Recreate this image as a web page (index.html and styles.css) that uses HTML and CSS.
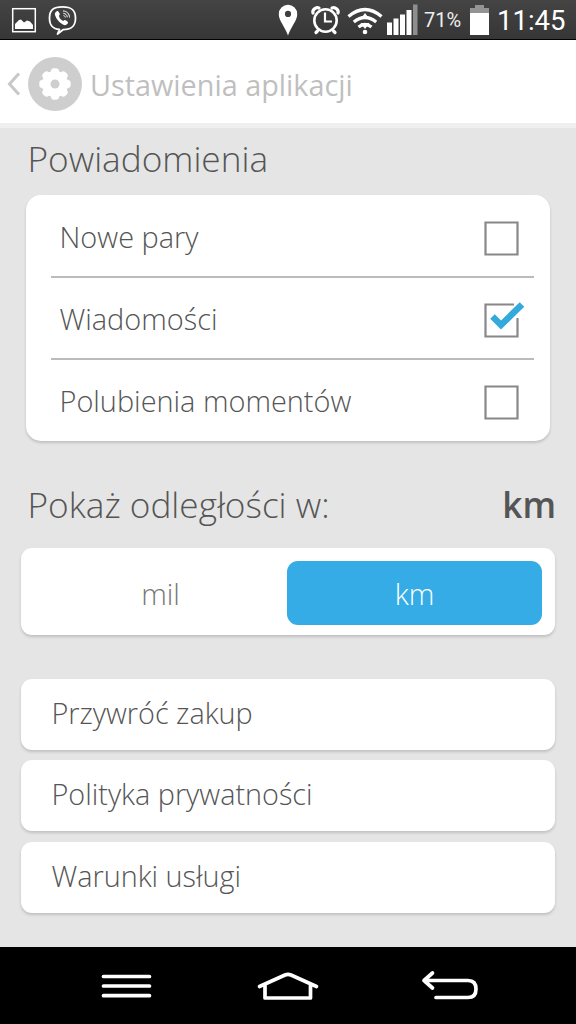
FILE: index.html
```html
<!DOCTYPE html>
<html lang="pl">
<head>
<meta charset="utf-8">
<title>Ustawienia aplikacji</title>
<link rel="stylesheet" href="styles.css">
</head>
<body>
<div class="phone">
  <div class="status">
    <svg class="status-left" width="80" height="39" viewBox="0 0 80 39" fill="none" stroke="#fff">
      <rect x="12.700" y="8.700" width="22.600" height="23" stroke-width="1.500"/>
      <path d="M15 29v-5l4-4 2-.5 3 3 3-2 3 1 3 3.500v4z" fill="#fff" stroke="none"/>
      <path d="M59.500 29.500c-7-.8-10-4-10-11.500 0-8 4-11.200 13-11.200S75.500 10 75.500 18c0 7.500-3 11.500-12.500 11.700l-5.500 4.300z" stroke-width="1.800" stroke-linejoin="round"/>
      <path d="M56.500 11.500c1-.8 1.700-.4 2.700 1.300.9 1.600.8 2-.3 3 .5 2.500 2 4.300 4.300 5.200 1.300-1.300 1.700-1.300 3.300-.2 2 1.400 2 2 .7 3.300-1.400 1.500-2.500 1.300-4.700.1-3.700-2.200-6.200-5.200-7.400-9-.5-1.800 0-2.900 1.400-3.700z" fill="#fff" stroke="none"/>
      <path d="M63 11c4 0 6.500 3 6.500 6.500M63.300 13.300c2.300.2 3.800 1.700 4 4M63.500 15.600c1.200.1 1.700.8 1.800 1.900" stroke-width="1"/>
    </svg>
    <div class="status-right">
      <svg class="pin" width="20" height="32" viewBox="0 0 20 32"><path fill="#fff" fill-rule="evenodd" d="M10 .8a9.200 9.200 0 0 1 9.200 9.400c0 6.500-6 12-9.200 21.300C6.800 22.200.8 16.700.8 10.200A9.200 9.200 0 0 1 10 .8zm0 6a3.100 3.100 0 1 0 0 6.200 3.100 3.100 0 0 0 0-6.200z"/></svg>
      <svg class="alarm" width="30" height="30" viewBox="0 0 30 30" fill="none" stroke="#fff" stroke-linecap="round"><circle cx="14.500" cy="15.500" r="11.200" stroke-width="2.600"/><path d="M14 7.500v9h7" stroke-width="2.200" stroke-linecap="butt"/><path d="M2 8C1 5 4.500 1.800 8 3M27 8C28 5 24.500 1.800 21 3M6.500 26l-1.500 1.500M22.500 26l1.500 1.500" stroke-width="3.200"/></svg>
      <svg class="wifi" width="36" height="28" viewBox="0 0 36 28" fill="none" stroke="#fff"><path d="M1.500 9.500q16.500-14 33 0" stroke-width="3.300"/><path d="M6.800 15q11.200-9 22.400 0M11.500 20q6.500-5 13 0" stroke-width="3.300"/><circle cx="18" cy="25" r="2.300" fill="#fff" stroke="none"/><path d="M18 6l4.500 6h-9zM13.500 16l9 0-4.500 6z" fill="#fff" stroke="none"/></svg>
      <svg class="signal" width="31" height="31" viewBox="0 0 31 31"><path fill="#fff" d="M0 18.500h5V31H0zM6.500 14.500h5V31h-5zM13 10.500h5V31h-5zM19.500 6h5v25h-5z"/><path fill="#8e8e8e" d="M26 .5h4.500V31H26z"/></svg>
      <span class="percent">71%</span>
      <svg class="battery" width="19" height="30" viewBox="0 0 19 30"><path fill="#949494" d="M5 0h9v3h5v6H0V3h5z"/><path fill="#fff" d="M0 8h19v22H0z"/></svg>
      <span class="clock">11:45</span>
    </div>
  </div>

  <div class="appbar">
    <svg class="back" width="14" height="26" viewBox="0 0 14 26"><path d="M13 2.500L3.500 13 13 23.500" fill="none" stroke="#c8c8c8" stroke-width="3"/></svg>
    <svg class="gear" width="54" height="54" viewBox="-27 -27 54 54"><circle r="27" fill="#cecece"/><g fill="#fff"><circle r="13.200"/><rect x="-4" y="-15.700" width="8" height="31.400" rx="3"/><rect x="-4" y="-15.700" width="8" height="31.400" rx="3" transform="rotate(45)"/><rect x="-4" y="-15.700" width="8" height="31.400" rx="3" transform="rotate(90)"/><rect x="-4" y="-15.700" width="8" height="31.400" rx="3" transform="rotate(135)"/></g><circle r="4.500" fill="#cecece"/></svg>
    <span class="title">Ustawienia aplikacji</span>
  </div>

  <div class="content">
    <div class="heading first"><span>Powiadomienia</span></div>
    <div class="card options">
      <div class="option"><span>Nowe pary</span><svg width="42" height="42" viewBox="0 0 42 42"><path class="box" d="M3.500 5.500h32v32h-32z"/></svg></div>
      <div class="option"><span>Wiadomości</span><svg width="42" height="42" viewBox="0 0 42 42"><path class="box" d="M32 5.500H3.500v32h32V19"/><path class="tick" d="M10.500 17.500l8.500 8.500L40 5.500"/></svg></div>
      <div class="option"><span>Polubienia momentów</span><svg width="42" height="42" viewBox="0 0 42 42"><path class="box" d="M3.500 5.500h32v32h-32z"/></svg></div>
    </div>
    <div class="heading distance"><span>Pokaż odległości w:</span><b>km</b></div>
    <div class="card units"><span class="unit">mil</span><span class="unit active">km</span></div>
    <div class="links">
      <div class="card link">Przywróć zakup</div>
      <div class="card link">Polityka prywatności</div>
      <div class="card link">Warunki usługi</div>
    </div>
  </div>

  <div class="navbar">
    <svg class="menu" width="52" height="28" viewBox="0 0 52 28"><path d="M3.500 4.500h46M3.500 14h46M3.500 23.700h46"/></svg>
    <svg class="home" width="62" height="30" viewBox="0 0 62 30"><path d="M2.500 15.500L28 4q3-1.300 6 0l25.500 11.500M8 13.500v13.500h45.500V13.500"/></svg>
    <svg class="return" width="60" height="32" viewBox="0 0 60 32"><path d="M12.500 3L4 10.500l8.500 7.500M4 10.500h44q8 0 8 8.500t-8 8.500H16"/></svg>
  </div>
</div>
</body>
</html>
```
FILE: styles.css
```css
* { box-sizing: border-box; }
body { margin: 0; font-family: "Open Sans", sans-serif; font-weight: 300; color: #555; }
.phone { width: 576px; height: 1024px; display: flex; flex-direction: column; overflow: hidden; background: #e5e5e5; }
svg { display: block; flex: none; overflow: visible; }
span, b { white-space: nowrap; }

.status { height: 40px; flex: none; display: flex; justify-content: space-between; background: linear-gradient(#444, #363636); border-bottom: 1px solid #000; color: #fff; }
.status-right { display: flex; align-items: flex-start; font-family: Roboto, sans-serif; font-weight: 400; }
.pin { margin-top: 4px; }
.alarm { margin: 5px 0 0 13px; }
.wifi { margin: 7px 0 0 6px; }
.signal { margin: 4px 0 0 4px; }
.percent { width: 38px; margin-left: 6px; font-size: 20px; line-height: 40px; color: #eee; }
.battery { margin: 5px 0 0 8px; }
.clock { width: 79px; margin-left: 8px; font-size: 27.500px; line-height: 42px; }

.appbar { height: 88px; flex: none; display: flex; align-items: center; padding-left: 6px; background: #fff; border-bottom: 5px solid #efefef; }
.back { margin-top: 5px; }
.gear { margin: 5px 0 0 8px; }
.title { margin: 5px 0 0 8px; font-size: 28.800px; font-weight: 400; color: #bfbfbf; }

.content { flex: 1; display: flex; flex-direction: column; }
.card { background: #fff; border-radius: 11px; box-shadow: 0 2px 3px rgba(0, 0, 0, .16); }
.heading { display: flex; justify-content: space-between; padding: 0 20px 0 27.500px; font-size: 35.200px; line-height: 48px; }
.heading b { font-weight: 600; }
.first { margin-top: 6px; }
.options { margin: 13px 26px 0; height: 246px; padding: 0 16px 0 25px; border-radius: 15px; display: flex; flex-direction: column; }
.option { height: 81.500px; display: flex; align-items: center; justify-content: space-between; padding: 1px 10px 0 8.500px; font-size: 28.900px; border-bottom: 2px solid #bbb; }
.option:first-child { height: 83px; padding-top: 2px; }
.option:last-child { border: 0; }
.option svg { margin-top: 3px; }
.box { fill: none; stroke: #888; stroke-width: 2.200; }
.tick { fill: none; stroke: #34aadc; stroke-width: 6.500; }
.distance { margin-top: 39px; }
.units { height: 87px; margin: 20px 21px 0; padding: 13px 13px 10px; display: flex; }
.unit { flex: 1; display: flex; justify-content: center; align-items: center; font-size: 29px; color: #777; }
.active { flex: none; width: 255px; border-radius: 11px; background: #35ace6; color: #fff; }
.links { margin: 44px 21px 0; display: flex; flex-direction: column; gap: 10.400px; }
.link { height: 71px; padding-left: 30.500px; font-size: 28.800px; line-height: 67px; }

.navbar { height: 77px; flex: none; display: flex; align-items: flex-start; background: #000; }
.navbar svg { fill: none; stroke: #fff; stroke-width: 3.700; stroke-linecap: round; stroke-linejoin: round; }
.menu { margin: 25px 0 0 100px; }
.home { margin: 24px 0 0 105px; }
.return { margin: 23px 0 0 101px; }
```
